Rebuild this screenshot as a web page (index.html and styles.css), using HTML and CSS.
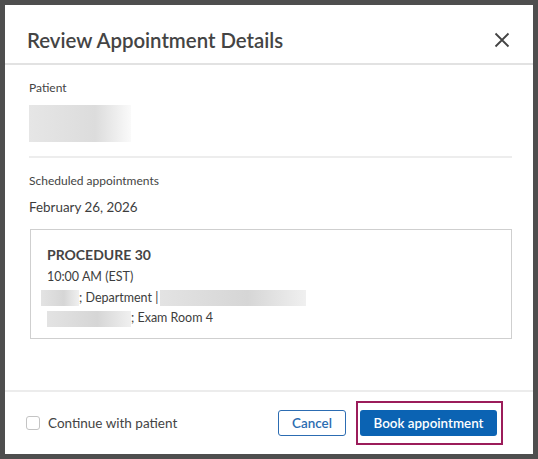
FILE: index.html
```html
<!DOCTYPE html>
<html lang="en">
<head>
    <meta charset="UTF-8">
    <meta name="viewport" content="width=device-width, initial-scale=1.0">
    <title>Review Appointment Details</title>
    <link rel="stylesheet" href="styles.css">
</head>
<body>
<div class="dialog">
    <!-- Header -->
    <div class="dialog-header">
        <h1>Review Appointment Details</h1>
        <button class="close-btn" aria-label="Close">
            <svg width="16" height="16" viewBox="0 0 16 16">
                <path d="M1.5 1.5 L14.5 14.5 M14.5 1.5 L1.5 14.5" stroke="#444" stroke-width="1.8" fill="none"/>
            </svg>
        </button>
    </div>

    <!-- Body -->
    <div class="dialog-body">
        <div class="section">
            <div class="label">Patient</div>
            <div class="redacted patient-name"></div>
        </div>
        <div class="section">
            <div class="label">Scheduled appointments</div>
            <div class="date">February 26, 2026</div>
            <div class="appt-card">
                <div class="appt-title">PROCEDURE 30</div>
                <div class="appt-line">10:00 AM (EST)</div>
                <div class="appt-line shift"><span class="redacted r1"></span>; Department |<span class="redacted r2"></span></div>
                <div class="appt-line"><span class="redacted r3"></span>; Exam Room 4</div>
            </div>
        </div>
    </div>

    <!-- Footer -->
    <div class="dialog-footer">
        <label class="check">
            <span class="box"></span>
            Continue with patient
        </label>
        <div class="actions">
            <button class="btn btn-outline">Cancel</button>
            <span class="focus-ring"><button class="btn btn-primary">Book appointment</button></span>
        </div>
    </div>
</div>
</body>
</html>
```

FILE: styles.css
```css
body {
    margin: 0;
    padding: 0;
    background-color: #4e4e4e;
    font-family: Lato, "Noto Sans", sans-serif;
    color: #3d3d3d;
}

.dialog {
    margin: 5px;
    width: 528px;
    height: 449px;
    background: #fff;
    display: flex;
    flex-direction: column;
}

/* Header */
.dialog-header {
    box-sizing: border-box;
    height: 60px;
    border-bottom: 2px solid #e2e2e2;
    display: flex;
    align-items: center;
    justify-content: space-between;
    padding: 12px 23px 0 22px;
}

.dialog-header h1 {
    margin: 0;
    font-size: 20.4px;
    font-weight: 600;
    color: #444;
}

.close-btn {
    background: none;
    border: none;
    padding: 0;
    width: 16px;
    height: 16px;
    cursor: pointer;
}

.close-btn svg {
    display: block;
}

/* Body */
.dialog-body {
    flex: 1;
    padding: 15px 21px 0 24px;
}

.section + .section {
    border-top: 2px solid #ededed;
    margin-top: 14px;
    padding-top: 15px;
}

.label {
    font-size: 12px;
    color: #444;
    margin-bottom: 10px;
}

.redacted {
    display: inline-block;
    background: linear-gradient(90deg, #e3e3e3, #d6d6d6 60%, #f0f0f0);
    vertical-align: middle;
}

.patient-name {
    display: block;
    width: 102px;
    height: 37px;
    background: linear-gradient(90deg, #e6e6e6, #dcdcdc 65%, #fafafa);
}

.date {
    font-size: 13.4px;
    margin-top: 11px;
    margin-bottom: 14px;
}

.appt-card {
    border: 1px solid #cfcfcf;
    padding: 16px 16px 9px 16px;
    margin-left: 1px;
}

.appt-title {
    font-size: 14px;
    font-weight: 700;
    color: #444;
    margin-bottom: 4px;
}

.appt-line {
    font-size: 12.5px;
    line-height: 20.5px;
}

.appt-line.shift {
    margin-left: -6px;
}

.r1 { width: 38px; height: 16px; }
.r2 { width: 146px; height: 16px; margin-left: 2px; }
.r3 { width: 84px; height: 16px; }

/* Footer */
.dialog-footer {
    box-sizing: border-box;
    height: 64px;
    border-top: 2px solid #ececec;
    display: flex;
    align-items: center;
    justify-content: space-between;
    padding: 0 30px 0 21px;
}

.check {
    display: flex;
    align-items: center;
    gap: 8px;
    font-size: 13.5px;
    color: #444;
}

.check .box {
    width: 12px;
    height: 12px;
    border: 1px solid #c4c4c4;
    border-radius: 3px;
}

.actions {
    display: flex;
    align-items: center;
    gap: 10px;
}

.btn {
    height: 26px;
    font-family: inherit;
    font-size: 13.4px;
    font-weight: 600;
    border-radius: 3px;
    cursor: pointer;
    padding: 0;
}

.btn-outline {
    background: #fff;
    color: #2b6cb0;
    border: 1px solid #2c6cb2;
    width: 68px;
}

.btn-primary {
    background: #0b63b3;
    color: #fff;
    border: none;
    width: 137px;
}

.focus-ring {
    display: inline-flex;
    padding: 7px 4px 7px 2px;
    border: 2px solid #9b1c5a;
}
```
